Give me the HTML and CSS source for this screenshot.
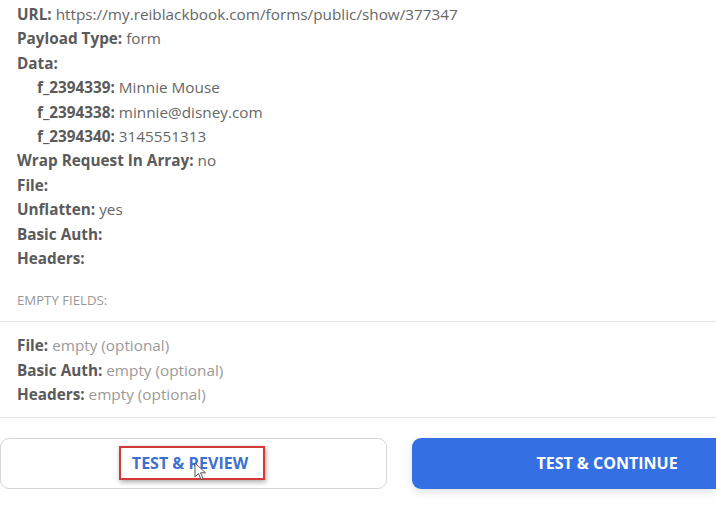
FILE: index.html
```html
<html>
  <head>
    <title>Webhook Test</title>
    <link rel="stylesheet" href="styles.css">
  </head>
  <body>
    <div class="fields">
      <div class="row"><b>URL:</b> https://my.reiblackbook.com/forms/public/show/377347</div>
      <div class="row"><b>Payload Type:</b> form</div>
      <div class="row"><b>Data:</b></div>
      <div class="row sub"><b>f_2394339:</b> Minnie Mouse</div>
      <div class="row sub"><b>f_2394338:</b> minnie@disney.com</div>
      <div class="row sub"><b>f_2394340:</b> 3145551313</div>
      <div class="row"><b>Wrap Request In Array:</b> no</div>
      <div class="row"><b>File:</b></div>
      <div class="row"><b>Unflatten:</b> yes</div>
      <div class="row"><b>Basic Auth:</b></div>
      <div class="row"><b>Headers:</b></div>
    </div>

    <div class="empty-title">EMPTY FIELDS:</div>
    <div class="empty-list">
      <div class="row"><b>File:</b> <span class="muted">empty (optional)</span></div>
      <div class="row"><b>Basic Auth:</b> <span class="muted">empty (optional)</span></div>
      <div class="row"><b>Headers:</b> <span class="muted">empty (optional)</span></div>
    </div>

    <div class="actions">
      <button class="btn btn-outline">
        <span class="highlight">TEST &amp; REVIEW</span>
        <svg class="cursor" width="14" height="20" viewBox="0 0 14 20">
          <path d="M1 1 L1 15 L4.5 11.5 L7 17.5 L9 16.6 L6.6 10.8 L11.5 10.8 Z" fill="#fff" stroke="#555" stroke-width="1"/>
        </svg>
      </button>
      <button class="btn btn-primary">TEST &amp; CONTINUE</button>
    </div>
  </body>
</html>
```

FILE: styles.css
```css
* {
  box-sizing: border-box;
}
body {
  margin: 0;
  background-color: #fff;
  font-family: "Open Sans", "Liberation Sans", sans-serif;
  font-size: 15.3px;
  color: #666;
  overflow: hidden;
}
.fields {
  padding: 2px 0 0 17px;
}
.row {
  line-height: 24.4px;
  white-space: nowrap;
}
.row b {
  color: #5a5a5a;
  font-weight: 700;
}
.sub {
  padding-left: 20px;
}
.empty-title {
  padding: 21px 17px 0 17px;
  height: 52px;
  font-size: 13.2px;
  color: #999;
  border-bottom: 1px solid #e6e6e6;
}
.empty-list {
  padding: 11px 17px 10px 17px;
  border-bottom: 1px solid #e6e6e6;
}
.row .muted {
  color: #9a9a9a;
}
.actions {
  display: grid;
  grid-template-columns: 387px 1fr;
  gap: 25px;
  margin-top: 20px;
}
.btn {
  height: 51px;
  border-radius: 9px;
  font-family: "Open Sans", "Liberation Sans", sans-serif;
  font-size: 16px;
  font-weight: 700;
  cursor: pointer;
}
.btn-outline {
  position: relative;
  background-color: #fff;
  border: 1px solid #d6d6d6;
  color: #3d70d0;
  padding: 0 3px 0 0;
}
.highlight {
  display: inline-block;
  border: 2px solid #d43a35;
  padding: 3px 15px 3px 11px;
  line-height: 24px;
  box-shadow: 1px 2px 5px rgba(0, 0, 0, 0.35);
}
.cursor {
  position: absolute;
  left: 193px;
  top: 23px;
}
.btn-primary {
  background-color: #3470e4;
  border: none;
  border-radius: 9px 0 0 9px;
  color: #fff;
  padding: 0 0 0 86px;
  box-shadow: 0 3px 8px rgba(0, 0, 0, 0.12);
}
```
